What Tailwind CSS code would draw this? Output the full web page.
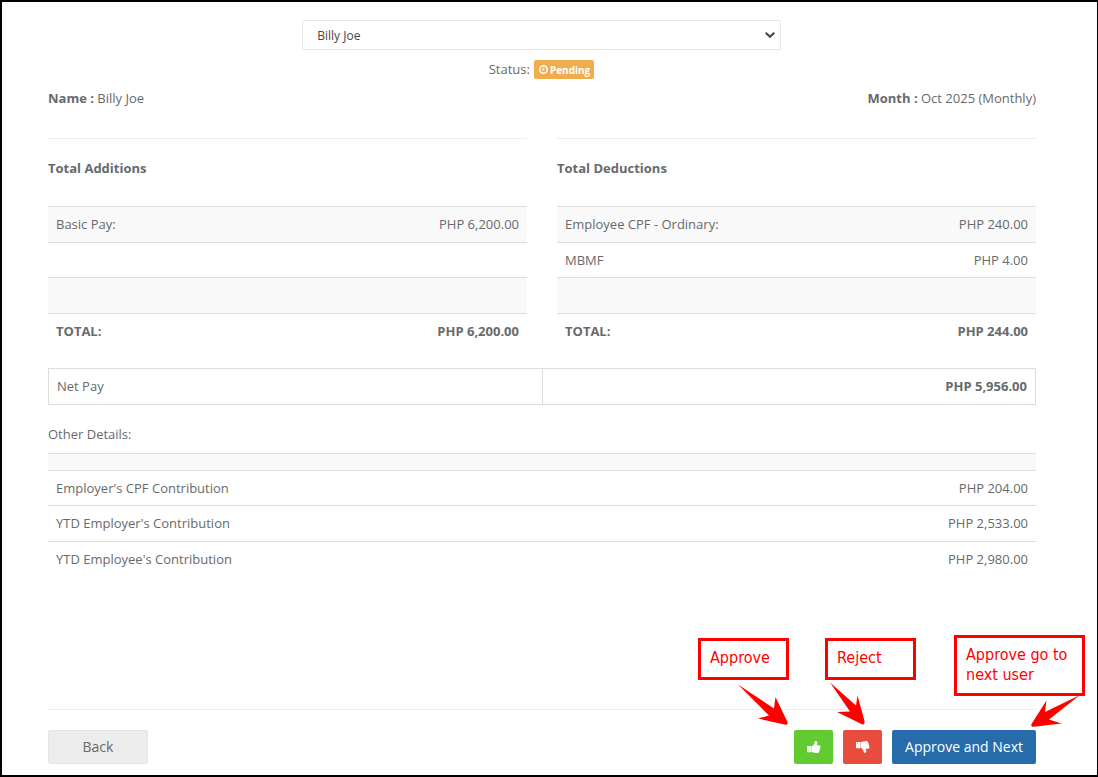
<!doctype html>
<html lang="en">
  <head>
    <meta charset="UTF-8" />
    <meta name="viewport" content="width=device-width, initial-scale=1.0" />
    <title>Payslip Approval</title>
    <script src="https://cdn.jsdelivr.net/npm/@tailwindcss/browser@4"></script>
  </head>
  <body class="bg-white font-['Open_Sans',sans-serif] text-[13px] leading-[18px] text-[#676a6c]">
    <div class="relative min-h-screen border-2 border-r border-black pt-[18px] pr-[61px] pb-[11px] pl-[46px] flex flex-col">
      <!-- employee picker -->
      <div class="flex flex-col items-center pr-px">
        <div class="relative w-[calc(50%-15px)]">
          <select
            id="employee"
            aria-label="Employee"
            class="block w-full h-[30px] appearance-none rounded-xs border border-[#e5e6e7] bg-white px-3.5 pt-0.5 text-[12px] leading-5 text-[#444]"
          >
            <option>Billy Joe</option>
          </select>
          <svg
            class="absolute top-3 right-1.5 w-2.5 h-1.5 pointer-events-none"
            aria-hidden="true"
            viewBox="0 0 10 6"
            fill="none"
          >
            <path d="M0.7 0.7 5 4.8 9.3 0.7" stroke="#444" stroke-width="2" />
          </svg>
        </div>
        <p class="mt-2 flex items-center gap-1">
          Status:
          <span class="mt-0.5 flex h-[19px] items-center gap-0.5 rounded-xs bg-[#f0ad4e] pr-1 pl-[5px] text-[10px] font-bold text-white">
            <svg class="w-[9px] h-[9px]" aria-hidden="true" viewBox="0 0 9 9" fill="none" stroke="#fff">
              <circle cx="4.5" cy="4.5" r="3.7" stroke-width="1.5" />
              <path d="M4.9 2.3v2.6H3" stroke-width="1" />
            </svg>
            Pending
          </span>
        </p>
      </div>

      <div class="mt-2.5 flex justify-between">
        <p><strong>Name :</strong> Billy Joe</p>
        <p><strong>Month :</strong> Oct 2025 (Monthly)</p>
      </div>

      <!-- additions / deductions -->
      <div class="mt-[31px] grid grid-cols-2 gap-[30px]">
        <section class="border-t border-[#eee] pt-5">
          <h2 class="font-bold">Total Additions</h2>
          <table class="mt-[29px] w-full">
            <tbody class="align-top">
              <tr class="h-9 border-t border-[#ddd] bg-[#f9f9f9]">
                <td class="px-2 pt-2">Basic Pay:</td>
                <td class="px-2 pt-2 text-right">PHP 6,200.00</td>
              </tr>
              <tr class="h-[35px] border-t border-[#ddd]">
                <td colspan="2"></td>
              </tr>
              <tr class="h-9 border-t border-[#ddd] bg-[#f9f9f9]">
                <td colspan="2"></td>
              </tr>
              <tr class="h-[35px] border-t border-[#ddd] font-bold">
                <td class="px-2 pt-2">TOTAL:</td>
                <td class="px-2 pt-2 text-right">PHP 6,200.00</td>
              </tr>
            </tbody>
          </table>
        </section>
        <section class="border-t border-[#eee] pt-5">
          <h2 class="font-bold">Total Deductions</h2>
          <table class="mt-[29px] w-full">
            <tbody class="align-top">
              <tr class="h-9 border-t border-[#ddd] bg-[#f9f9f9]">
                <td class="px-2 pt-2">Employee CPF - Ordinary:</td>
                <td class="px-2 pt-2 text-right">PHP 240.00</td>
              </tr>
              <tr class="h-[35px] border-t border-[#ddd]">
                <td class="px-2 pt-2">MBMF</td>
                <td class="px-2 pt-2 text-right">PHP 4.00</td>
              </tr>
              <tr class="h-9 border-t border-[#ddd] bg-[#f9f9f9]">
                <td colspan="2"></td>
              </tr>
              <tr class="h-[35px] border-t border-[#ddd] font-bold">
                <td class="px-2 pt-2">TOTAL:</td>
                <td class="px-2 pt-2 text-right">PHP 244.00</td>
              </tr>
            </tbody>
          </table>
        </section>
      </div>

      <table class="mt-[19px] w-full table-fixed">
        <tbody class="align-top">
          <tr class="h-9">
            <td class="border border-[#ddd] px-2 pt-2">Net Pay</td>
            <td class="border border-[#ddd] px-2 pt-2 text-right font-bold">PHP 5,956.00</td>
          </tr>
        </tbody>
      </table>

      <h2 class="mt-5">Other Details:</h2>
      <table class="mt-2.5 w-full">
        <tbody class="align-top">
          <tr class="h-[17px] border-t border-[#ddd] bg-[#f9f9f9]">
            <td colspan="2"></td>
          </tr>
          <tr class="h-[35px] border-t border-[#ddd]">
            <td class="px-2 pt-2">Employer's CPF Contribution</td>
            <td class="px-2 pt-2 text-right">PHP 204.00</td>
          </tr>
          <tr class="h-9 border-t border-[#ddd]">
            <td class="px-2 pt-2">YTD Employer's Contribution</td>
            <td class="px-2 pt-2 text-right">PHP 2,533.00</td>
          </tr>
          <tr class="h-[35px] border-t border-[#ddd]">
            <td class="px-2 pt-2">YTD Employee's Contribution</td>
            <td class="px-2 pt-2 text-right">PHP 2,980.00</td>
          </tr>
        </tbody>
      </table>

      <!-- actions -->
      <div class="mt-auto flex items-center justify-between border-t border-[#eee] pt-5 text-[14px]">
        <button type="button" class="h-[34px] w-[100px] rounded-xs border border-[#e4e4e4] bg-[#ececec]">Back</button>
        <div class="flex gap-2.5 text-white">
          <button type="button" aria-label="Approve" class="flex h-[34px] w-[39px] items-center justify-center rounded-xs bg-[#62cb31]">
            <svg class="w-3.5 h-3.5" aria-hidden="true" viewBox="0 0 14 14" fill="#fff">
              <path fill-rule="evenodd" d="M.5 6h3.5c.3 0 .4.2.4.5v5.200c0 .3-.1.5-.4.5H.5a.5.5 0 0 1-.5-.5V6.500c0-.3.2-.5.500-.5ZM1 10.400v.8h.8v-.8Z" />
              <path d="M4.600 6.200C5.800 6 6.400 4.600 7.100 3.900 7.800 3.100 7.600 1 8.500 1c1.200 0 1.800.8 1.800 1.900 0 .9-.7 1.600-.7 2.400h2.400c.8 0 1.500.7 1.500 1.500 0 .4-.2.8-.4 1.100.2.700 0 1.300-.4 1.700.1.600-.1 1.200-.5 1.600 0 1.300-.9 1.800-2.300 1.800-1.900 0-3.500-.9-5.300-1.100Z" />
            </svg>
          </button>
          <button type="button" aria-label="Reject" class="flex h-[34px] w-[39px] items-center justify-center rounded-xs bg-[#e74c3c]">
            <svg class="w-3.5 h-3.5" aria-hidden="true" viewBox="0 0 14 14" fill="#fff">
              <path fill-rule="evenodd" d="M.5 2h3.500c.3 0 .4.200.4.500v5.200c0 .3-.1.500-.4.500H.5a.5.5 0 0 1-.5-.5V2.500C0 2.200.2 2 .5 2ZM1 3v.8h.8V3Z" />
              <path d="M4.600 7.800c1.200.2 1.800 1.600 2.500 2.300.7.800.5 2.900 1.400 2.900 1.200 0 1.800-.8 1.800-1.900 0-.9-.7-1.600-.7-2.400h2.400c.8 0 1.500-.7 1.500-1.500 0-.4-.2-.8-.4-1.100.2-.7 0-1.300-.4-1.700.1-.6-.1-1.200-.5-1.600 0-1.300-.9-1.800-2.300-1.800-1.900 0-3.500.9-5.300 1.100Z" />
            </svg>
          </button>
          <button type="button" class="h-[34px] rounded-xs bg-[#266cab] px-[13px]">Approve and Next</button>
        </div>
      </div>

      <!-- annotations over the action buttons -->
      <div class="font-['DejaVu_Sans_Condensed','Noto_Sans',sans-serif] text-[16px] leading-5 text-[#f00]">
        <div class="absolute right-[308px] bottom-[95px] h-[42px] w-[91px] border-3 border-[#f00] px-[9px] py-[7px]">Approve</div>
        <div class="absolute right-[181px] bottom-[95px] h-[42px] w-[91px] border-3 border-[#f00] px-[9px] py-[7px]">Reject</div>
        <div class="absolute right-3 bottom-[79px] h-[61px] w-[131px] border-3 border-[#f00] px-[9px] py-[7px]">Approve go to next user</div>
      </div>
      <svg class="absolute right-0 bottom-0 w-[397px] h-[95px] pointer-events-none" aria-hidden="true" viewBox="700 680 397 95" fill="#f00">
        <path d="M738 684.500 774 708.500 775.500 697 787.500 722Q788.500 725 785.500 724.800L758 718.500 769 715.500Z" />
        <path d="M830 682.500 856 705.500 857.500 695.500 864.500 721Q865 725 862 724.300L837 712 850 711.500Z" />
        <path d="M1080 695 1045 712 1046.500 700.500 1031.500 724Q1030.500 727 1034 726.800L1061.500 723.500 1049 719.500Z" />
      </svg>
    </div>
  </body>
</html>
